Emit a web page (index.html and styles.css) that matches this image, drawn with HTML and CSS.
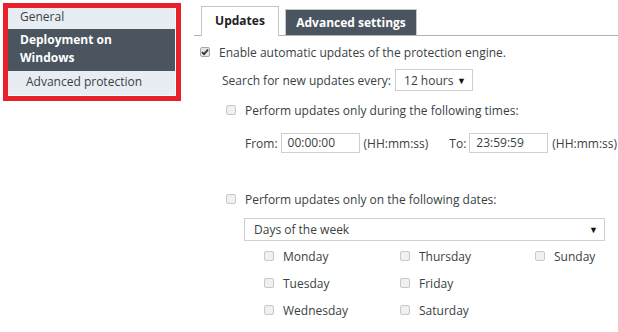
FILE: index.html
```html
<!DOCTYPE html>
<html lang="en">
<head>
    <meta charset="UTF-8">
    <title>Updates settings</title>
    <link rel="stylesheet" href="styles.css">
</head>
<body>
    <div class="sidebar">
        <div class="nav-item">General</div>
        <div class="nav-item active">Deployment on Windows</div>
        <div class="nav-item sub">Advanced protection</div>
    </div>

    <div class="main">
        <div class="tabs">
            <div class="tab current">Updates</div>
            <div class="tab">Advanced settings</div>
        </div>

        <div class="row first">
            <input type="checkbox" class="cb" checked>
            <span>Enable automatic updates of the protection engine.</span>
        </div>

        <div class="row search">
            <span>Search for new updates every:</span>
            <div class="select small">12 hours <span class="arrow">&#9660;</span></div>
        </div>

        <div class="row indent">
            <input type="checkbox" class="cb">
            <span>Perform updates only during the following times:</span>
        </div>

        <div class="row times">
            <span>From:</span>
            <div class="field">00:00:00</div>
            <span class="hint">(HH:mm:ss)</span>
            <span class="to">To:</span>
            <div class="field">23:59:59</div>
            <span class="hint">(HH:mm:ss)</span>
        </div>

        <div class="row indent dates">
            <input type="checkbox" class="cb">
            <span>Perform updates only on the following dates:</span>
        </div>

        <div class="select wide">Days of the week <span class="arrow">&#9660;</span></div>

        <div class="days">
            <label class="day"><input type="checkbox" class="cb">Monday</label>
            <label class="day"><input type="checkbox" class="cb">Thursday</label>
            <label class="day"><input type="checkbox" class="cb">Sunday</label>
            <label class="day"><input type="checkbox" class="cb">Tuesday</label>
            <label class="day"><input type="checkbox" class="cb">Friday</label>
            <span></span>
            <label class="day"><input type="checkbox" class="cb">Wednesday</label>
            <label class="day"><input type="checkbox" class="cb">Saturday</label>
        </div>
    </div>
</body>
</html>
```

FILE: styles.css
```css
body {
    margin: 0;
    font-family: "Open Sans", sans-serif;
    font-size: 12px;
    color: #3a3f44;
    background-color: white;
    display: flex;
    align-items: flex-start;
    width: 618px;
    height: 332px;
    overflow: hidden;
}

.sidebar {
    margin: 3px 0 0 3px;
    width: 167px;
    border: 5px solid #e8202a;
    padding: 0 1px 1px 0;
    background-color: white;
}

.nav-item {
    background-color: #e8edf4;
    padding: 0 12px 3px;
    line-height: 18px;
}

.nav-item.active {
    background-color: #4a5560;
    color: white;
    font-weight: bold;
    padding: 2px 40px 4px 12px;
}

.nav-item.sub {
    padding: 1px 0 3px 18px;
    line-height: 20px;
}

.main {
    flex: 1;
    padding-left: 13px;
}

.tabs {
    display: flex;
    align-items: flex-end;
    margin-top: 6px;
    padding-left: 7px;
    border-bottom: 1px solid #b3b3b3;
    height: 29px;
}

.tab {
    font-weight: bold;
    text-align: center;
}

.tab.current {
    width: 76px;
    height: 29px;
    line-height: 27px;
    border: 1px solid #c6c6c6;
    border-bottom: none;
    background-color: white;
    color: #222;
    margin-bottom: -1px;
}

.tab:not(.current) {
    width: 132px;
    height: 26px;
    line-height: 26px;
    margin-left: 6px;
    background-color: #4a5560;
    color: white;
    border: 1px solid #c6c6c6;
    border-bottom: none;
    box-sizing: border-box;
}

.row {
    display: flex;
    align-items: center;
}

.row.first {
    margin-top: 10px;
    margin-left: 6px;
    height: 12px;
}

.row.search {
    margin-top: 11px;
    margin-left: 28px;
}

.row.indent {
    margin-top: 13px;
    margin-left: 32px;
    height: 12px;
}

.row.times {
    margin-top: 17px;
    margin-left: 51px;
}

.row.dates {
    margin-top: 40px;
}

.cb {
    appearance: none;
    margin: 0 9px 0 0;
    width: 10px;
    height: 10px;
    border: 1px solid #c8c8c8;
    border-radius: 2px;
    background-color: #f0f0f0;
    flex-shrink: 0;
}

.cb:checked {
    background: #e6e6e6 url("data:image/svg+xml;utf8,<svg xmlns='http://www.w3.org/2000/svg' viewBox='0 0 10 10'><path d='M2 5.2 L4 7.2 L8 2.6' fill='none' stroke='%23333' stroke-width='1.8'/></svg>") center / 10px no-repeat;
    border-color: #a8a8a8;
}

.select {
    border: 1px solid #cfcfcf;
    background-color: white;
    display: flex;
    align-items: center;
    box-sizing: border-box;
}

.select.small {
    margin-left: 4px;
    width: 78px;
    height: 22px;
    padding-left: 8px;
}

.select.wide {
    margin: 13px 0 0 50px;
    width: 361px;
    height: 23px;
    padding-left: 9px;
}

.arrow {
    margin-left: auto;
    margin-right: 6px;
    font-size: 9px;
    color: #111;
}

.field {
    width: 79px;
    height: 20px;
    box-sizing: border-box;
    border: 1px solid #cfcfcf;
    padding-left: 6px;
    line-height: 18px;
    margin: 0 4px 0 3px;
}

.to {
    margin-left: 21px;
}

.days {
    display: grid;
    grid-template-columns: 136px 135px 80px;
    row-gap: 9px;
    margin: 6px 0 0 70px;
}

.day {
    display: flex;
    align-items: center;
    height: 18px;
}
```
